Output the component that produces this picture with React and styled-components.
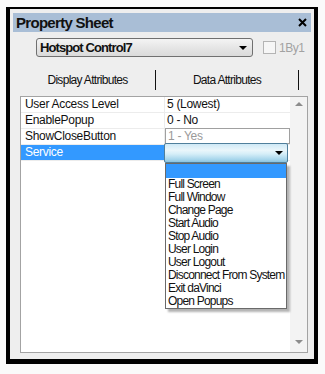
import React from 'react';
import styled, { createGlobalStyle } from 'styled-components';

const GlobalStyle = createGlobalStyle`
  body {
    margin: 0;
    background: #fafafa;
    font-family: "Liberation Sans", Arial, sans-serif;
  }
`;

const Frame = styled.div`
  box-sizing: border-box;
  width: 312px;
  height: 357px;
  margin: 7px 0 0 6px;
  border-style: solid;
  border-color: #000;
  border-width: 2px 4px 5px 4px;
  background: #eeeeee;
  padding: 4px 3px 0;
  display: flex;
  flex-direction: column;
  box-shadow: 0 1px 0 #9a9a9a;
`;

const TitleBar = styled.div`
  height: 19px;
  background: #a9bed6;
  padding: 0 4px 0 3px;
  display: flex;
  align-items: center;
  justify-content: space-between;
`;

const Title = styled.span`
  font-size: 15px;
  font-weight: bold;
  letter-spacing: -0.7px;
  color: #111;
`;

const Header = styled.div`
  margin-top: 6px;
  padding-left: 23px;
  display: flex;
  align-items: center;
`;

const Select = styled.div`
  box-sizing: border-box;
  width: 217px;
  height: 19px;
  border: 1px solid #707070;
  border-radius: 3px;
  background: linear-gradient(#f4f4f4, #e6e6e6 50%, #dadada);
  display: flex;
  align-items: center;
  justify-content: space-between;
  padding: 0 5px 0 3px;
  font-size: 13px;
  font-weight: bold;
  letter-spacing: -0.9px;
  color: #111;
`;

const Arrow = styled.span`
  width: 0;
  height: 0;
  border-left: 4px solid transparent;
  border-right: 4px solid transparent;
  border-top: 4px solid ${p => p.$color || '#000'};
`;

const UpArrow = styled(Arrow)`
  border-top: 0;
  border-bottom: 4px solid #8c8c8c;
`;

const Check = styled.span`
  box-sizing: border-box;
  width: 13px;
  height: 13px;
  margin-left: 10px;
  border: 1px solid #b4b4b4;
  background: #f6f6f6;
`;

const CheckLabel = styled.span`
  margin-left: 3px;
  font-size: 12px;
  letter-spacing: -0.5px;
  color: #a2a2a2;
`;

const Tabs = styled.div`
  margin: 11px 0 0 7px;
  height: 24px;
  display: flex;
  align-items: center;
`;

const Tab = styled.div`
  width: ${p => p.$w}px;
  text-align: center;
  font-size: 12px;
  letter-spacing: -0.7px;
  color: #111;
`;

const Sep = styled.div`
  width: 1px;
  height: 20px;
  background: #111;
`;

const List = styled.div`
  box-sizing: border-box;
  margin: 4px 0 0 7px;
  width: 288px;
  height: 257px;
  border: 1px solid #a3a3a3;
  background: #fff;
  display: flex;
`;

const Grid = styled.div`
  flex: 1;
`;

const Row = styled.div`
  box-sizing: border-box;
  height: 16px;
  display: flex;
  border-bottom: 1px solid #ececec;
  font-size: 12px;
  letter-spacing: -0.3px;
`;

const NameCell = styled.div`
  box-sizing: border-box;
  width: 144px;
  padding-left: 4px;
  line-height: 15px;
  border-right: 1px solid #ececec;
  background: ${p => (p.$selected ? '#3399ff' : 'transparent')};
  color: ${p => (p.$selected ? '#fff' : '#111')};
`;

const ValueCell = styled.div`
  position: relative;
  flex: 1;
  padding-left: 2px;
  line-height: 15px;
  color: #111;
`;

const DisabledBox = styled.div`
  box-sizing: border-box;
  height: 16px;
  margin: -1px 0 0 -2px;
  padding-left: 2px;
  border: 1px solid #a0a0a0;
  line-height: 14px;
  color: #9a9a9a;
`;

const Combo = styled.div`
  box-sizing: border-box;
  position: absolute;
  left: -1px;
  top: -2px;
  width: 124px;
  height: 20px;
  border: 1px solid #4f7f9c;
  border-radius: 2px;
  background: linear-gradient(#cfe9f6, #eaf6fb 35%, #d6eef8 55%, #a8d6ec 85%, #8cc4e0);
  display: flex;
  align-items: center;
  justify-content: flex-end;
  padding-right: 4px;
  z-index: 2;
`;

const Popup = styled.div`
  box-sizing: border-box;
  position: absolute;
  left: 0;
  top: 18px;
  width: 122px;
  border: 1px solid #6a6a6a;
  background: #fff;
  box-shadow: 3px 3px 2px rgba(0, 0, 0, 0.3);
  z-index: 1;
`;

const Option = styled.div`
  height: ${p => (p.$active ? 14 : 13)}px;
  line-height: 13px;
  padding-left: 2px;
  font-size: 12px;
  letter-spacing: -0.8px;
  color: #111;
  background: ${p => (p.$active ? '#3399ff' : '#fff')};
`;

const Scrollbar = styled.div`
  width: 17px;
  background: #f3f3f3;
  display: flex;
  flex-direction: column;
  justify-content: space-between;
  align-items: center;
  padding: 5px 0 8px;
`;

const CloseIcon = () => (
  <svg width="9" height="9" viewBox="0 0 9 9">
    <path d="M1 1L8 8M8 1L1 8" stroke="#000" strokeWidth="2" />
  </svg>
);

const rows = [
  { name: 'User Access Level', value: '5 (Lowest)' },
  { name: 'EnablePopup', value: '0 - No' },
  { name: 'ShowCloseButton', value: '1 - Yes', disabled: true },
];

const options = [
  'Full Screen',
  'Full Window',
  'Change Page',
  'Start Audio',
  'Stop Audio',
  'User Login',
  'User Logout',
  'Disconnect From System',
  'Exit daVinci',
  'Open Popups',
];

export default function App() {
  return (
    <>
      <GlobalStyle />
      <Frame>
        <TitleBar>
          <Title>Property Sheet</Title>
          <CloseIcon />
        </TitleBar>
        <Header>
          <Select>
            <span>Hotspot Control7</span>
            <Arrow />
          </Select>
          <Check />
          <CheckLabel>1By1</CheckLabel>
        </Header>
        <Tabs>
          <Tab $w={135}>Display Attributes</Tab>
          <Sep />
          <Tab $w={142}>Data Attributes</Tab>
          <Sep />
        </Tabs>
        <List>
          <Grid>
            {rows.map(r => (
              <Row key={r.name}>
                <NameCell>{r.name}</NameCell>
                <ValueCell>
                  {r.disabled ? <DisabledBox>{r.value}</DisabledBox> : r.value}
                </ValueCell>
              </Row>
            ))}
            <Row>
              <NameCell $selected>Service</NameCell>
              <ValueCell>
                <Combo>
                  <Arrow />
                </Combo>
                <Popup>
                  <Option $active />
                  {options.map(o => (
                    <Option key={o}>{o}</Option>
                  ))}
                </Popup>
              </ValueCell>
            </Row>
          </Grid>
          <Scrollbar>
            <UpArrow />
            <Arrow $color="#8c8c8c" />
          </Scrollbar>
        </List>
      </Frame>
    </>
  );
}
